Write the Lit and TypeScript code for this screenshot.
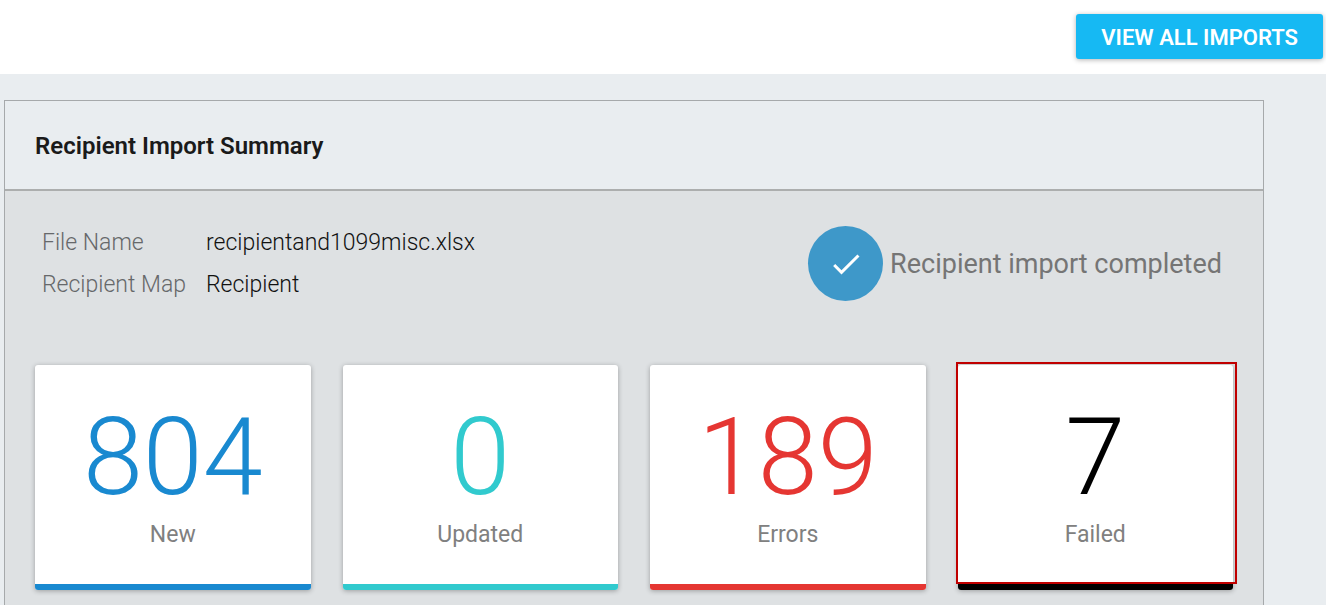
import { LitElement, html, css } from "lit";
import { customElement, property } from "lit/decorators.js";

@customElement("stat-card")
class StatCard extends LitElement {
  @property({ type: Number }) value = 0;
  @property() label = "";
  @property({ type: Boolean, reflect: true }) highlighted = false;

  static styles = css`
    :host {
      position: relative;
      display: block;
      color: #1989d0;
    }
    :host([tone="updated"]) {
      color: #31cace;
    }
    :host([tone="errors"]) {
      color: #e53632;
    }
    :host([tone="failed"]) {
      color: #000;
    }
    .card {
      display: flex;
      flex-direction: column;
      align-items: center;
      overflow: hidden;
      border-radius: 3px;
      background: #fff;
      box-shadow: 0 1px 5px rgba(0, 0, 0, 0.3);
    }
    .value {
      padding-top: 32px;
      font-size: 108px;
      font-weight: 300;
      line-height: 120px;
    }
    .label {
      padding: 1px 0 32px;
      color: #808080;
      font-size: 23px;
      line-height: 34px;
    }
    .stripe {
      align-self: stretch;
      height: 6px;
      background: currentColor;
    }
    .outline {
      position: absolute;
      inset: -3px -4px 6px -2px;
      border: 2px solid #c00000;
      pointer-events: none;
    }
  `;

  render() {
    return html`
      <div class="card">
        <div class="value">${this.value}</div>
        <div class="label">${this.label}</div>
        <div class="stripe"></div>
      </div>
      ${this.highlighted ? html`<div class="outline"></div>` : null}
    `;
  }
}

@customElement("app-root")
class AppRoot extends LitElement {
  static styles = css`
    :host {
      display: flex;
      flex-direction: column;
      min-height: 100vh;
      background: #e9edf0;
      color: #212121;
      font-family: Roboto, "Liberation Sans", sans-serif;
    }
    .toolbar {
      display: flex;
      justify-content: flex-end;
      padding: 14px 3px 15px;
      background: #fff;
    }
    .action {
      padding: 2px 25px 0;
      border: 0;
      border-radius: 3px;
      background: #16b9f3;
      box-shadow: 0 1px 5px rgba(0, 0, 0, 0.3);
      color: #fff;
      font-family: inherit;
      font-size: 22px;
      font-weight: 600;
      line-height: 43px;
      text-transform: uppercase;
      cursor: pointer;
    }
    .panel {
      display: flex;
      flex: 1;
      flex-direction: column;
      margin: 26px 62px 0 4px;
      border: 1px solid #a6a9ab;
      border-bottom: 0;
    }
    .title {
      margin: 0;
      padding: 29px 30px 27px;
      border-bottom: 2px solid #acaeae;
      color: #1a1a1a;
      font-size: 24px;
      font-weight: 600;
      line-height: 32px;
    }
    .body {
      flex: 1;
      padding: 31px 30px 15px;
      background: #dee1e3;
    }
    .summary {
      display: flex;
      justify-content: space-between;
      align-items: flex-start;
      margin-bottom: 59px;
      padding: 0 11px 0 7px;
    }
    .facts {
      display: grid;
      grid-template-columns: auto auto;
      column-gap: 20px;
      margin: 0;
      color: #111;
      font-size: 23px;
      font-weight: 300;
      line-height: 42px;
    }
    .facts dt {
      color: #66686a;
    }
    .facts dd {
      margin: 0;
    }
    .status {
      display: flex;
      align-items: center;
      gap: 7px;
      padding-top: 4px;
      color: #757575;
      font-size: 27px;
      line-height: 36px;
    }
    .badge {
      display: grid;
      place-items: center;
      width: 75px;
      height: 75px;
      border-radius: 50%;
      background: #3e98c9;
    }
    .cards {
      display: grid;
      grid-template-columns: repeat(4, 1fr);
      gap: 32px;
    }
  `;

  render() {
    return html`
      <header class="toolbar">
        <button class="action" type="button">View all imports</button>
      </header>
      <main class="panel">
        <h1 class="title">Recipient Import Summary</h1>
        <div class="body">
          <div class="summary">
            <dl class="facts">
              <dt>File Name</dt>
              <dd>recipientand1099misc.xlsx</dd>
              <dt>Recipient Map</dt>
              <dd>Recipient</dd>
            </dl>
            <div class="status">
              <span class="badge">
                <svg width="36" height="36" viewBox="0 0 24 24" fill="#fff" aria-hidden="true">
                  <path d="M9 16.17 4.83 12l-1.42 1.41L9 19 21 7l-1.41-1.41z" />
                </svg>
              </span>
              <span>Recipient import completed</span>
            </div>
          </div>
          <div class="cards">
            <stat-card tone="new" .value=${804} label="New"></stat-card>
            <stat-card tone="updated" .value=${0} label="Updated"></stat-card>
            <stat-card tone="errors" .value=${189} label="Errors"></stat-card>
            <stat-card tone="failed" .value=${7} label="Failed" highlighted></stat-card>
          </div>
        </div>
      </main>
    `;
  }
}
